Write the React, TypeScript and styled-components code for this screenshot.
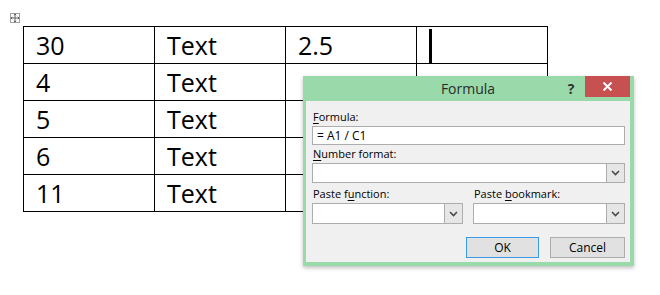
import React from 'react';
import styled, {createGlobalStyle} from 'styled-components';

const GlobalStyle = createGlobalStyle`
  html, body {
    margin: 0;
    padding: 0;
    background: #ffffff;
  }
  body {
    width: 660px;
    height: 295px;
    overflow: hidden;
    font-family: "Open Sans", "Noto Sans", sans-serif;
  }
`;

const Page = styled.div`
  position: relative;
  width: 660px;
  height: 295px;
  padding: 26px 0 0 23px;
  box-sizing: border-box;
`;

const MoveHandle = styled.div`
  position: absolute;
  left: 10px;
  top: 13px;
  width: 8px;
  height: 8px;
  border: 1px solid #a0a0a0;
  background: #ffffff;
  display: flex;
  align-items: center;
  justify-content: center;
`;

const DocTable = styled.table`
  border-collapse: collapse;
  font-family: "Open Sans", "Noto Sans", sans-serif;
  font-size: 25px;
  color: #000000;
`;

const Cell = styled.td`
  width: 131px;
  height: 37px;
  padding: 0 0 0 12px;
  box-sizing: border-box;
  border: 1px solid #000000;
  line-height: 36px;
  position: relative;
`;

const Caret = styled.span`
  position: absolute;
  left: 12px;
  top: 2px;
  width: 3px;
  height: 34px;
  background: #000000;
`;

const Dialog = styled.div`
  position: absolute;
  left: 303px;
  top: 76px;
  width: 331px;
  height: 190px;
  background: #99d9aa;
  box-shadow: 0 2px 4px rgba(0, 0, 0, 0.25);
  display: flex;
  flex-direction: column;
  padding: 0 4px 4px 3px;
  box-sizing: border-box;
  font-family: "Open Sans", "Noto Sans", sans-serif;
`;

const TitleBar = styled.div`
  height: 25px;
  display: flex;
  align-items: center;
`;

const Title = styled.div`
  flex: 1;
  text-align: center;
  font-size: 14px;
  color: #2b2b2b;
  padding-left: 66px;
`;

const HelpMark = styled.div`
  width: 14px;
  font-size: 14px;
  font-weight: bold;
  color: #333333;
  margin-right: 7px;
  text-align: center;
`;

const CloseButton = styled.div`
  width: 45px;
  height: 21px;
  align-self: flex-start;
  background: #c75050;
  display: flex;
  align-items: center;
  justify-content: center;
`;

const Body = styled.div`
  flex: 1;
  background: #f0f0f0;
  padding: 8px 5px 0 6px;
  display: flex;
  flex-direction: column;
`;

const Label = styled.div<{gap?: number}>`
  font-size: 11px;
  line-height: 16px;
  height: 16px;
  color: #000000;
  margin-left: 1px;
  margin-top: ${(p) => p.gap ?? 0}px;
  margin-bottom: 1px;
  white-space: nowrap;
  u { text-decoration: underline; text-underline-offset: 2px; }
`;

const TextField = styled.div`
  height: 19px;
  border: 1px solid #adadad;
  background: #ffffff;
  box-sizing: border-box;
  font-size: 12px;
  line-height: 17px;
  padding-left: 4px;
  color: #000000;
`;

const Combo = styled.div<{h: number}>`
  height: ${(p) => p.h}px;
  border: 1px solid #adadad;
  background: #ffffff;
  box-sizing: border-box;
  display: flex;
  justify-content: flex-end;
`;

const ComboArrow = styled.div`
  width: 17px;
  background: #e6e6e6;
  border-left: 1px solid #adadad;
  display: flex;
  align-items: center;
  justify-content: center;
`;

const Columns = styled.div`
  display: grid;
  grid-template-columns: 151px 152px;
  column-gap: 10px;
  margin-top: 3px;
`;

const Column = styled.div`
  display: flex;
  flex-direction: column;
`;

const ButtonRow = styled.div`
  display: flex;
  justify-content: flex-end;
  gap: 11px;
  margin-top: 13px;
`;

const Button = styled.div<{primary?: boolean}>`
  width: ${(p) => (p.primary ? 73 : 75)}px;
  height: 21px;
  box-sizing: border-box;
  border: 1px solid ${(p) => (p.primary ? '#3c9be8' : '#adadad')};
  background: #e1e1e1;
  font-size: 12px;
  display: flex;
  align-items: center;
  justify-content: center;
  color: #000000;
`;

const Chevron = () => (
  <svg width="9" height="6" viewBox="0 0 9 6">
    <path d="M1 1 L4.5 4.5 L8 1" fill="none" stroke="#4a4a4a" strokeWidth="1.6"/>
  </svg>
);

const ComboBox: React.FC<{h: number}> = ({h}) => (
  <Combo h={h}>
    <ComboArrow><Chevron/></ComboArrow>
  </Combo>
);

const rows = [
  ['30', 'Text', '2.5', ''],
  ['4', 'Text', '', ''],
  ['5', 'Text', '', ''],
  ['6', 'Text', '', ''],
  ['11', 'Text', '', ''],
];

export default function App() {
  return (
    <Page>
      <GlobalStyle/>
      <MoveHandle>
        <svg width="8" height="8" viewBox="0 0 8 8">
          <path d="M4 0 V8 M0 4 H8 M2.8 1.2 L4 0 L5.2 1.2 M2.8 6.8 L4 8 L5.2 6.8 M1.2 2.8 L0 4 L1.2 5.2 M6.8 2.8 L8 4 L6.8 5.2"
                fill="none" stroke="#505050" strokeWidth="0.9"/>
        </svg>
      </MoveHandle>
      <DocTable>
        <tbody>
          {rows.map((r, i) => (
            <tr key={i}>
              {r.map((c, j) => (
                <Cell key={j}>
                  {c}
                  {i === 0 && j === 3 && <Caret/>}
                </Cell>
              ))}
            </tr>
          ))}
        </tbody>
      </DocTable>

      <Dialog>
        <TitleBar>
          <Title>Formula</Title>
          <HelpMark>?</HelpMark>
          <CloseButton>
            <svg width="11" height="9" viewBox="0 0 11 9">
              <path d="M1.5 0.5 L9.5 8.5 M9.5 0.5 L1.5 8.5" stroke="#ffffff" strokeWidth="2"/>
            </svg>
          </CloseButton>
        </TitleBar>
        <Body>
          <Label><u>F</u>ormula:</Label>
          <TextField>= A1 / C1</TextField>
          <Label gap={1}><u>N</u>umber format:</Label>
          <ComboBox h={20}/>
          <Columns>
            <Column>
              <Label>Paste f<u>u</u>nction:</Label>
              <ComboBox h={21}/>
            </Column>
            <Column>
              <Label>Paste <u>b</u>ookmark:</Label>
              <ComboBox h={21}/>
            </Column>
          </Columns>
          <ButtonRow>
            <Button primary>OK</Button>
            <Button>Cancel</Button>
          </ButtonRow>
        </Body>
      </Dialog>
    </Page>
  );
}
